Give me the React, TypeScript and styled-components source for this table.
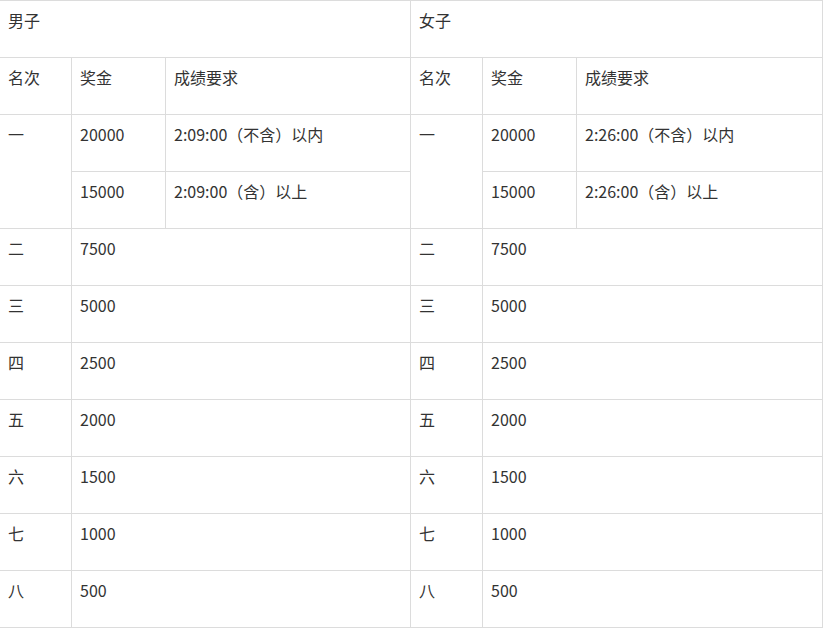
import React from "react";
import styled, { createGlobalStyle } from "styled-components";

const Global = createGlobalStyle`
  html, body { margin: 0; padding: 0; background: #fff; }
  body { font-family: "Noto Sans CJK SC", "Noto Sans", sans-serif; }
`;

const Frame = styled.div`
  width: 824px;
  overflow: hidden;
`;

const Table = styled.table`
  border-collapse: collapse;
  table-layout: fixed;
  width: 823px;
  margin-left: -1px;
  font-size: 16px;
  line-height: 24px;
  color: #333;
`;

const Td = styled.td`
  border: 1px solid #dcdcdc;
  height: 57px;
  padding: 7px 8px 0 8px;
  box-sizing: border-box;
  vertical-align: top;
  text-align: left;
  white-space: nowrap;
`;

type Place = { rank: string; prize: string };
const places: Place[] = [
  { rank: "二", prize: "7500" },
  { rank: "三", prize: "5000" },
  { rank: "四", prize: "2500" },
  { rank: "五", prize: "2000" },
  { rank: "六", prize: "1500" },
  { rank: "七", prize: "1000" },
  { rank: "八", prize: "500" },
];

export default function App() {
  return (
    <Frame>
      <Global />
      <Table>
        <colgroup>
          <col style={{ width: 72 }} />
          <col style={{ width: 94 }} />
          <col style={{ width: 245 }} />
          <col style={{ width: 72 }} />
          <col style={{ width: 94 }} />
          <col style={{ width: 246 }} />
        </colgroup>
        <tbody>
          <tr>
            <Td colSpan={3}>男子</Td>
            <Td colSpan={3}>女子</Td>
          </tr>
          <tr>
            <Td>名次</Td>
            <Td>奖金</Td>
            <Td>成绩要求</Td>
            <Td>名次</Td>
            <Td>奖金</Td>
            <Td>成绩要求</Td>
          </tr>
          <tr>
            <Td rowSpan={2}>一</Td>
            <Td>20000</Td>
            <Td>2:09:00（不含）以内</Td>
            <Td rowSpan={2}>一</Td>
            <Td>20000</Td>
            <Td>2:26:00（不含）以内</Td>
          </tr>
          <tr>
            <Td>15000</Td>
            <Td>2:09:00（含）以上</Td>
            <Td>15000</Td>
            <Td>2:26:00（含）以上</Td>
          </tr>
          {places.map((p) => (
            <tr key={p.rank}>
              <Td>{p.rank}</Td>
              <Td colSpan={2}>{p.prize}</Td>
              <Td>{p.rank}</Td>
              <Td colSpan={2}>{p.prize}</Td>
            </tr>
          ))}
        </tbody>
      </Table>
    </Frame>
  );
}
